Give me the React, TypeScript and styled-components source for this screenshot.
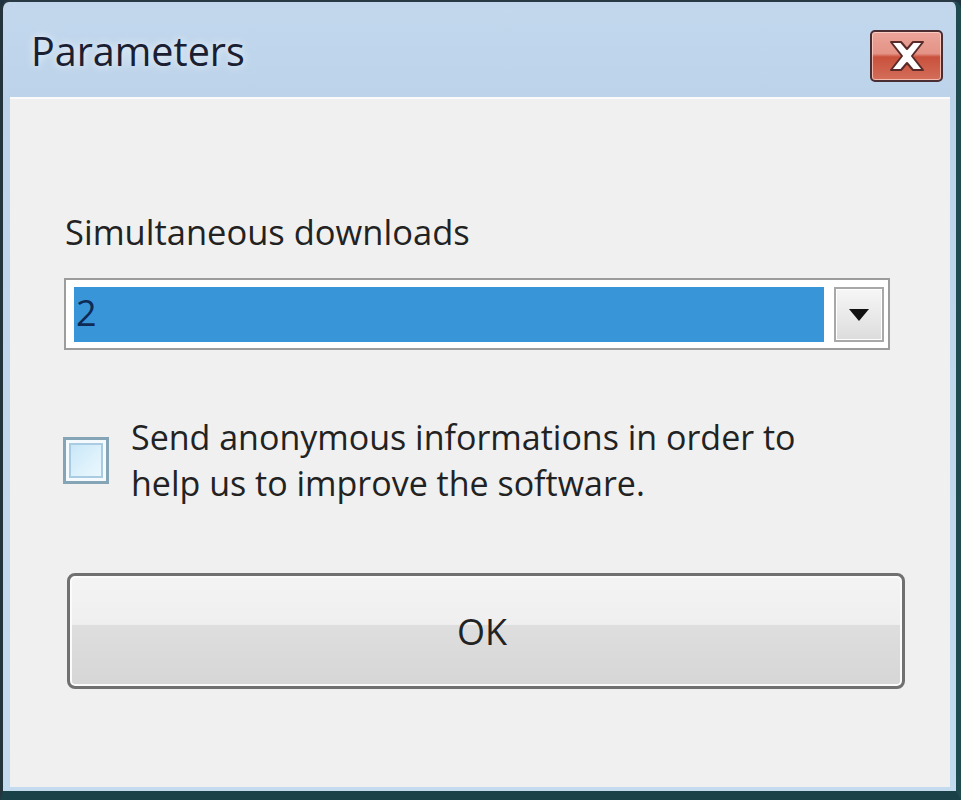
import React from "react";
import styled, { createGlobalStyle } from "styled-components";

const Global = createGlobalStyle`
  html, body { margin: 0; padding: 0; background: #1f3340; }
  body { font-family: "Open Sans", "Noto Sans", sans-serif; }
  * { box-sizing: border-box; }
`;

const Window = styled.div`
  width: 961px;
  height: 800px;
  display: flex;
  flex-direction: column;
  background: linear-gradient(180deg, #c3d8ed 0%, #bcd3ea 12%, #c4dbef 100%);
  border-style: solid;
  border-color: #2a3a44 #1e4a50 #1b4148 #24343c;
  border-width: 2px 5px 9px 3px;
  border-radius: 9px 9px 0 0;
  padding: 0 6px 4px 7px;
`;

const TitleBar = styled.div`
  height: 95px;
  flex: none;
  display: flex;
  align-items: flex-start;
  justify-content: space-between;
  padding: 24px 7px 0 21px;
`;

const Title = styled.div`
  font-size: 39.5px;
  color: #1a2032;
  line-height: 50px;
  text-shadow: 0 0 8px rgba(255, 255, 255, 0.9);
`;

const CloseButton = styled.div`
  width: 73px;
  height: 52px;
  margin-top: 4px;
  border: 2px solid #4a2e34;
  border-radius: 5px;
  background: linear-gradient(180deg, #eba49a 0%, #e49386 45%, #c9513c 52%, #d36e5a 100%);
  box-shadow: inset 0 0 0 1px rgba(255, 220, 210, 0.7);
  display: flex;
  align-items: center;
  justify-content: center;
`;

const Client = styled.div`
  flex: 1;
  background: #f0f0f0;
  border-top: 2px solid #fbfbfb;
  display: flex;
  flex-direction: column;
  padding: 110px 53px 0 54px;
`;

const Label = styled.div`
  font-size: 34.5px;
  color: #222;
  line-height: 46px;
  margin-left: 1px;
`;

const Combo = styled.div`
  margin-top: 23px;
  width: 826px;
  height: 72px;
  border: 2px solid #9c9c9c;
  background: #fff;
  padding: 7px 4px 6px 8px;
  display: flex;
  gap: 10px;
`;

const Selection = styled.div`
  flex: 1;
  background: #3896d8;
  color: #0e2a55;
  font-size: 36px;
  line-height: 52px;
  padding-left: 2px;
`;

const DropButton = styled.div`
  width: 50px;
  border: 2px solid #a8a8a8;
  background: linear-gradient(180deg, #f6f6f6 0%, #eaeaea 50%, #dcdcdc 100%);
  box-shadow: inset 0 0 0 1px #fff;
  display: flex;
  align-items: center;
  justify-content: center;
`;

const CheckRow = styled.div`
  margin-top: 64px;
  display: flex;
  align-items: center;
  gap: 22px;
`;

const CheckBox = styled.div`
  width: 46px;
  height: 47px;
  flex: none;
  border: 3px solid #85a4b5;
  background: #f4fafd;
  padding: 3px;
  margin-left: -1px;
`;

const CheckInner = styled.div`
  width: 100%;
  height: 100%;
  border: 2px solid #a9cce2;
  background: linear-gradient(135deg, #c9e7f8 0%, #def2fc 60%, #eaf7fd 100%);
`;

const CheckText = styled.div`
  font-size: 34px;
  color: #222;
  line-height: 46px;
`;

const OkButton = styled.div`
  margin-top: 67px;
  margin-left: 3px;
  width: 838px;
  height: 116px;
  border: 3px solid #707070;
  border-radius: 8px;
  background: linear-gradient(180deg, #f4f4f4 0%, #efeff0 44%, #dedede 45%, #d6d6d6 100%);
  box-shadow: inset 0 0 0 2px #fbfbfb;
  display: flex;
  align-items: center;
  justify-content: center;
  font-size: 36px;
  color: #222;
  padding-right: 8px;
`;

export default function App() {
  return (
    <>
      <Global />
      <Window>
        <TitleBar>
          <Title>Parameters</Title>
          <CloseButton>
            <svg width="42" height="34" viewBox="0 0 42 34">
              <path
                d="M5 3 L15 3 L21 10 L27 3 L37 3 L26 17 L37 31 L27 31 L21 24 L15 31 L5 31 L16 17 Z"
                fill="#ffffff"
                stroke="#5a2a2a"
                strokeWidth="2"
                strokeLinejoin="round"
              />
            </svg>
          </CloseButton>
        </TitleBar>
        <Client>
          <Label>Simultaneous downloads</Label>
          <Combo>
            <Selection>2</Selection>
            <DropButton>
              <svg width="22" height="14" viewBox="0 0 22 14">
                <path d="M1 1 L21 1 L11 13 Z" fill="#111" />
              </svg>
            </DropButton>
          </Combo>
          <CheckRow>
            <CheckBox>
              <CheckInner />
            </CheckBox>
            <CheckText>
              Send anonymous informations in order to
              <br />
              help us to improve the software.
            </CheckText>
          </CheckRow>
          <OkButton>OK</OkButton>
        </Client>
      </Window>
    </>
  );
}
